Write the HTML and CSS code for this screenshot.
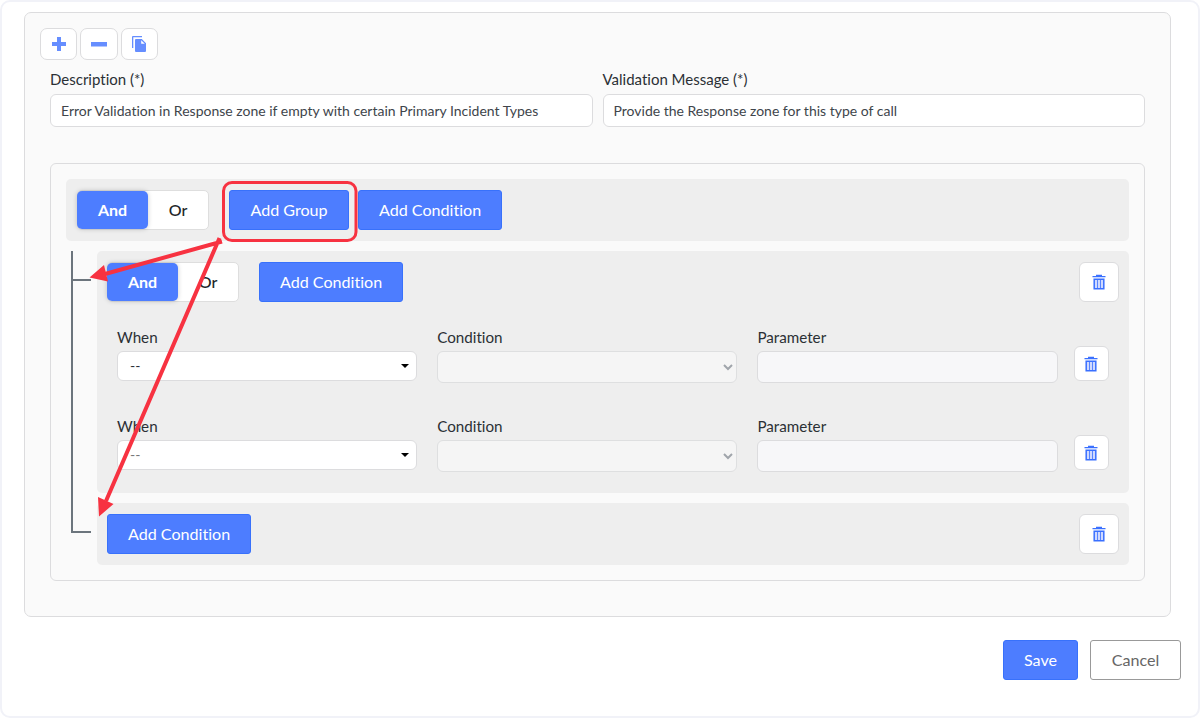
FILE: index.html
```html
<!DOCTYPE html>
<html lang="en">
<head>
    <meta charset="UTF-8">
    <meta name="viewport" content="width=device-width, initial-scale=1.0">
    <title>Validation Rules</title>
    <link rel="stylesheet" href="styles.css">
</head>
<body>
    <svg class="sprite" width="0" height="0">
        <symbol id="trash" viewBox="0 0 14 16">
            <path d="M.5 2.700h13M4 1.500h6" fill="none" stroke="currentColor" stroke-width="1.300"/>
            <path d="M2.200 5.200h9.600v9.600H2.200z" fill="#cfd9ff" stroke="currentColor" stroke-width="1.500"/>
            <path d="M5.500 5v10M8.500 5v10" fill="none" stroke="currentColor" stroke-width=".8"/>
        </symbol>
    </svg>

    <div class="window">
        <div class="panel">
            <div class="toolbar">
                <button class="tool-btn" aria-label="Add">
                    <svg width="16" height="16" viewBox="0 0 16 16"><path d="M6 1h4v5h5v4h-5v5H6v-5H1V6h5z"/></svg>
                </button>
                <button class="tool-btn" aria-label="Remove">
                    <svg width="18" height="16" viewBox="0 0 18 16"><path d="M1 6h16v4.5H1z"/></svg>
                </button>
                <button class="tool-btn" aria-label="Copy">
                    <svg width="16" height="18" viewBox="0 0 16 18"><path d="M1 13V2q0-1 1-1h9v1.300H2.300V13z"/><path d="M5 4h5.800l4.200 4.200V16q0 1-1 1H5q-1 0-1-1V5q0-1 1-1zM10.200 5.200v3.600h3.600z" fill-rule="evenodd"/></svg>
                </button>
            </div>

            <div class="fields">
                <div class="field">
                    <label for="description">Description (*)</label>
                    <input type="text" class="text-input" id="description" value="Error Validation in Response zone if empty with certain Primary Incident Types">
                </div>
                <div class="field">
                    <label for="message">Validation Message (*)</label>
                    <input type="text" class="text-input" id="message" value="Provide the Response zone for this type of call">
                </div>
            </div>

            <div class="rules">
                <div class="group group-root">
                    <div class="toggle">
                        <button class="active">And</button>
                        <button>Or</button>
                    </div>
                    <button class="btn btn-group">Add Group</button>
                    <button class="btn btn-next">Add Condition</button>
                </div>

                <div class="tree">
                    <div class="branches">
                        <div class="branch branch-first"></div>
                        <div class="branch branch-last"></div>
                    </div>
                    <div class="children">
                        <div class="group">
                            <div class="group-header">
                                <div class="toggle">
                                    <button class="active">And</button>
                                    <button>Or</button>
                                </div>
                                <button class="btn">Add Condition</button>
                                <button class="delete-btn" aria-label="Delete group"><svg><use href="#trash"/></svg></button>
                            </div>
                            <div class="condition">
                                <div class="field">
                                    <label>When</label>
                                    <div class="select">-- <span class="caret"></span></div>
                                </div>
                                <div class="field">
                                    <label>Condition</label>
                                    <div class="select disabled">
                                        <svg class="chevron" width="10" height="7" viewBox="0 0 10 7"><path d="M1 1l4 4 4-4"/></svg>
                                    </div>
                                </div>
                                <div class="field">
                                    <label>Parameter</label>
                                    <div class="parameter"></div>
                                </div>
                                <button class="delete-btn small" aria-label="Delete condition"><svg><use href="#trash"/></svg></button>
                            </div>
                            <div class="condition">
                                <div class="field">
                                    <label>When</label>
                                    <div class="select placeholder">-- <span class="caret"></span></div>
                                </div>
                                <div class="field">
                                    <label>Condition</label>
                                    <div class="select disabled">
                                        <svg class="chevron" width="10" height="7" viewBox="0 0 10 7"><path d="M1 1l4 4 4-4"/></svg>
                                    </div>
                                </div>
                                <div class="field">
                                    <label>Parameter</label>
                                    <div class="parameter"></div>
                                </div>
                                <button class="delete-btn small" aria-label="Delete condition"><svg><use href="#trash"/></svg></button>
                            </div>
                        </div>
                        <div class="group group-last">
                            <div class="group-header">
                                <button class="btn">Add Condition</button>
                                <button class="delete-btn" aria-label="Delete group"><svg><use href="#trash"/></svg></button>
                            </div>
                        </div>
                    </div>
                </div>
            </div>
        </div>

        <div class="footer">
            <button class="btn btn-save">Save</button>
            <button class="btn btn-cancel">Cancel</button>
        </div>

        <!-- callout: Add Group and the places it creates -->
        <svg class="callout" width="1200" height="718" viewBox="0 0 1200 718">
            <rect x="223.500" y="182.500" width="132.500" height="58" rx="8.500"/>
            <path d="M222 241.500L105 274M219.500 238L106 501"/>
            <path class="head" d="M89.500 277.500l14.500-12.500 4 16.500zM99 516.500l-1-19.500 15.500 7z"/>
        </svg>
    </div>
</body>
</html>
```
FILE: styles.css
```css
:root {
    --blue: #4d7dff;
    --blue-border: #3871fb;
    --border: #dcdcde;
    --group-bg: #eeeeee;
    --line: #6c757d;
    --red: #f73241;
}

* {
    box-sizing: border-box;
}

body {
    margin: 0;
    background: #fff;
    font-family: Lato, "Liberation Sans", sans-serif;
    font-size: 15px;
    font-variant-ligatures: none;
    color: #2b3035;
}

button, input {
    font-family: inherit;
    font-variant-ligatures: none;
    margin: 0;
}

.sprite {
    position: absolute;
}

.window {
    position: relative;
    height: 718px;
    padding: 10px 17px 0 22px;
    border: 2px solid #f1f2f8;
    border-radius: 10px;
    overflow: hidden;
}

.panel {
    width: 1147px;
    height: 605px;
    padding: 15px 25px 0;
    border: 1px solid var(--border);
    border-radius: 7px;
    background: #fafafa;
}

.toolbar {
    display: flex;
    gap: 3px;
    margin-left: -10px;
}

.tool-btn {
    display: flex;
    align-items: center;
    justify-content: center;
    width: 37.400px;
    height: 32px;
    padding: 0;
    border: 1px solid var(--border);
    border-radius: 7px;
    background: #fff;
}

.tool-btn svg {
    fill: #668eff;
}

.fields {
    display: grid;
    grid-template-columns: 1fr 1fr;
    gap: 10px;
    margin-top: 10px;
}

label {
    display: block;
    height: 24px;
    line-height: 19px;
}

.text-input {
    display: block;
    width: 100%;
    height: 33px;
    padding: 0 10px 1px;
    border: 1px solid var(--border);
    border-radius: 6px;
    background: #fff;
    font-size: 14px;
    color: #40454b;
}

.rules {
    height: 418px;
    margin-top: 36px;
    padding: 15px;
    border: 1px solid var(--border);
    border-radius: 6px;
}

.group {
    border-radius: 5px;
    background: var(--group-bg);
}

.group-root {
    display: flex;
    align-items: center;
    height: 62px;
    padding-left: 11px;
}

.toggle {
    display: flex;
    align-items: center;
    width: 132px;
    height: 40px;
    margin-right: 20px;
    border: 1px solid #dedede;
    border-radius: 5px;
    background: #fff;
}

.toggle button {
    flex: 1;
    height: 38px;
    padding: 0 0 2px;
    border: 0;
    background: none;
    font-size: 16px;
    font-weight: 500;
    color: #212529;
}

.toggle .active {
    flex: none;
    width: 71px;
    margin-left: -1px;
    border-radius: 5px;
    background: var(--blue);
    box-shadow: 0 0 5px rgba(0, 0, 0, 0.2);
    font-weight: bold;
    color: #fff;
}

.btn {
    height: 40px;
    padding: 0 20px 2px;
    border: 1px solid var(--blue-border);
    border-radius: 3px;
    background: var(--blue);
    font-size: 16.100px;
    color: #fff;
}

.btn-group {
    width: 120px;
    padding: 0 0 2px;
}

.btn-next {
    margin-left: 9px;
}

.tree {
    display: flex;
    margin-top: 10px;
}

.branches {
    width: 20px;
    height: 282px;
    margin: 0 6px 0 5px;
    border-left: 2px solid var(--line);
}

.branch {
    border-bottom: 2px solid var(--line);
}

.branch-first {
    height: 30px;
}

.branch-last {
    height: 252px;
}

.children {
    flex: 1;
    display: flex;
    flex-direction: column;
    gap: 10px;
}

.children .group {
    height: 242px;
    padding: 11px 10.500px 0 10px;
}

.children .group-last {
    height: 62px;
}

.group-header {
    display: flex;
    align-items: center;
    height: 40px;
}

.delete-btn {
    display: flex;
    align-items: center;
    justify-content: center;
    width: 40px;
    height: 40px;
    margin-left: auto;
    padding: 0;
    border: 1px solid var(--border);
    border-radius: 6px;
    background: #fff;
    color: #3a70ff;
}

.delete-btn svg {
    width: 14px;
    height: 16px;
}

.delete-btn.small {
    width: 35px;
    height: 35px;
    margin: 19px 0 0 -5px;
}

.condition {
    display: grid;
    grid-template-columns: 300px 300px 301px 35px;
    gap: 20.200px;
    height: 89.400px;
    padding: 0 0 0 10px;
}

.condition label {
    font-size: 15.200px;
    line-height: 21px;
}

.group-header + .condition {
    margin-top: 25px;
}

.select {
    display: flex;
    align-items: center;
    justify-content: space-between;
    height: 30px;
    padding: 0 7px 2px 12px;
    border: 1px solid var(--border);
    border-radius: 6px;
    background: #fff;
    font-size: 14px;
}

.select.placeholder {
    color: #777;
}

.select.disabled {
    justify-content: flex-end;
    height: 32px;
    padding: 1px 3px 0 0;
    border-color: #dedfe0;
    background: #f5f5f5;
}

.caret {
    margin-top: 1px;
    border: 4px solid transparent;
    border-top-color: #000;
    border-bottom: 0;
}

.chevron {
    fill: none;
    stroke: #a0a5ab;
    stroke-width: 2;
}

.parameter {
    height: 32px;
    border: 1px solid var(--border);
    border-radius: 6px;
    background: #f7f7f9;
}

.footer {
    display: flex;
    justify-content: flex-end;
    gap: 12px;
    margin-top: 23px;
}

.footer .btn {
    width: 75px;
    padding: 0 0 2px;
}

.footer .btn-cancel {
    width: 91px;
    border-color: #999;
    background: #fff;
    color: #666;
}

/* sits over the whole window */
.callout {
    position: absolute;
    top: -2px;
    left: -2px;
    fill: none;
    stroke: var(--red);
    stroke-width: 3;
    pointer-events: none;
}

.callout path {
    stroke-width: 4;
}

.callout .head {
    fill: var(--red);
    stroke: none;
}
```
